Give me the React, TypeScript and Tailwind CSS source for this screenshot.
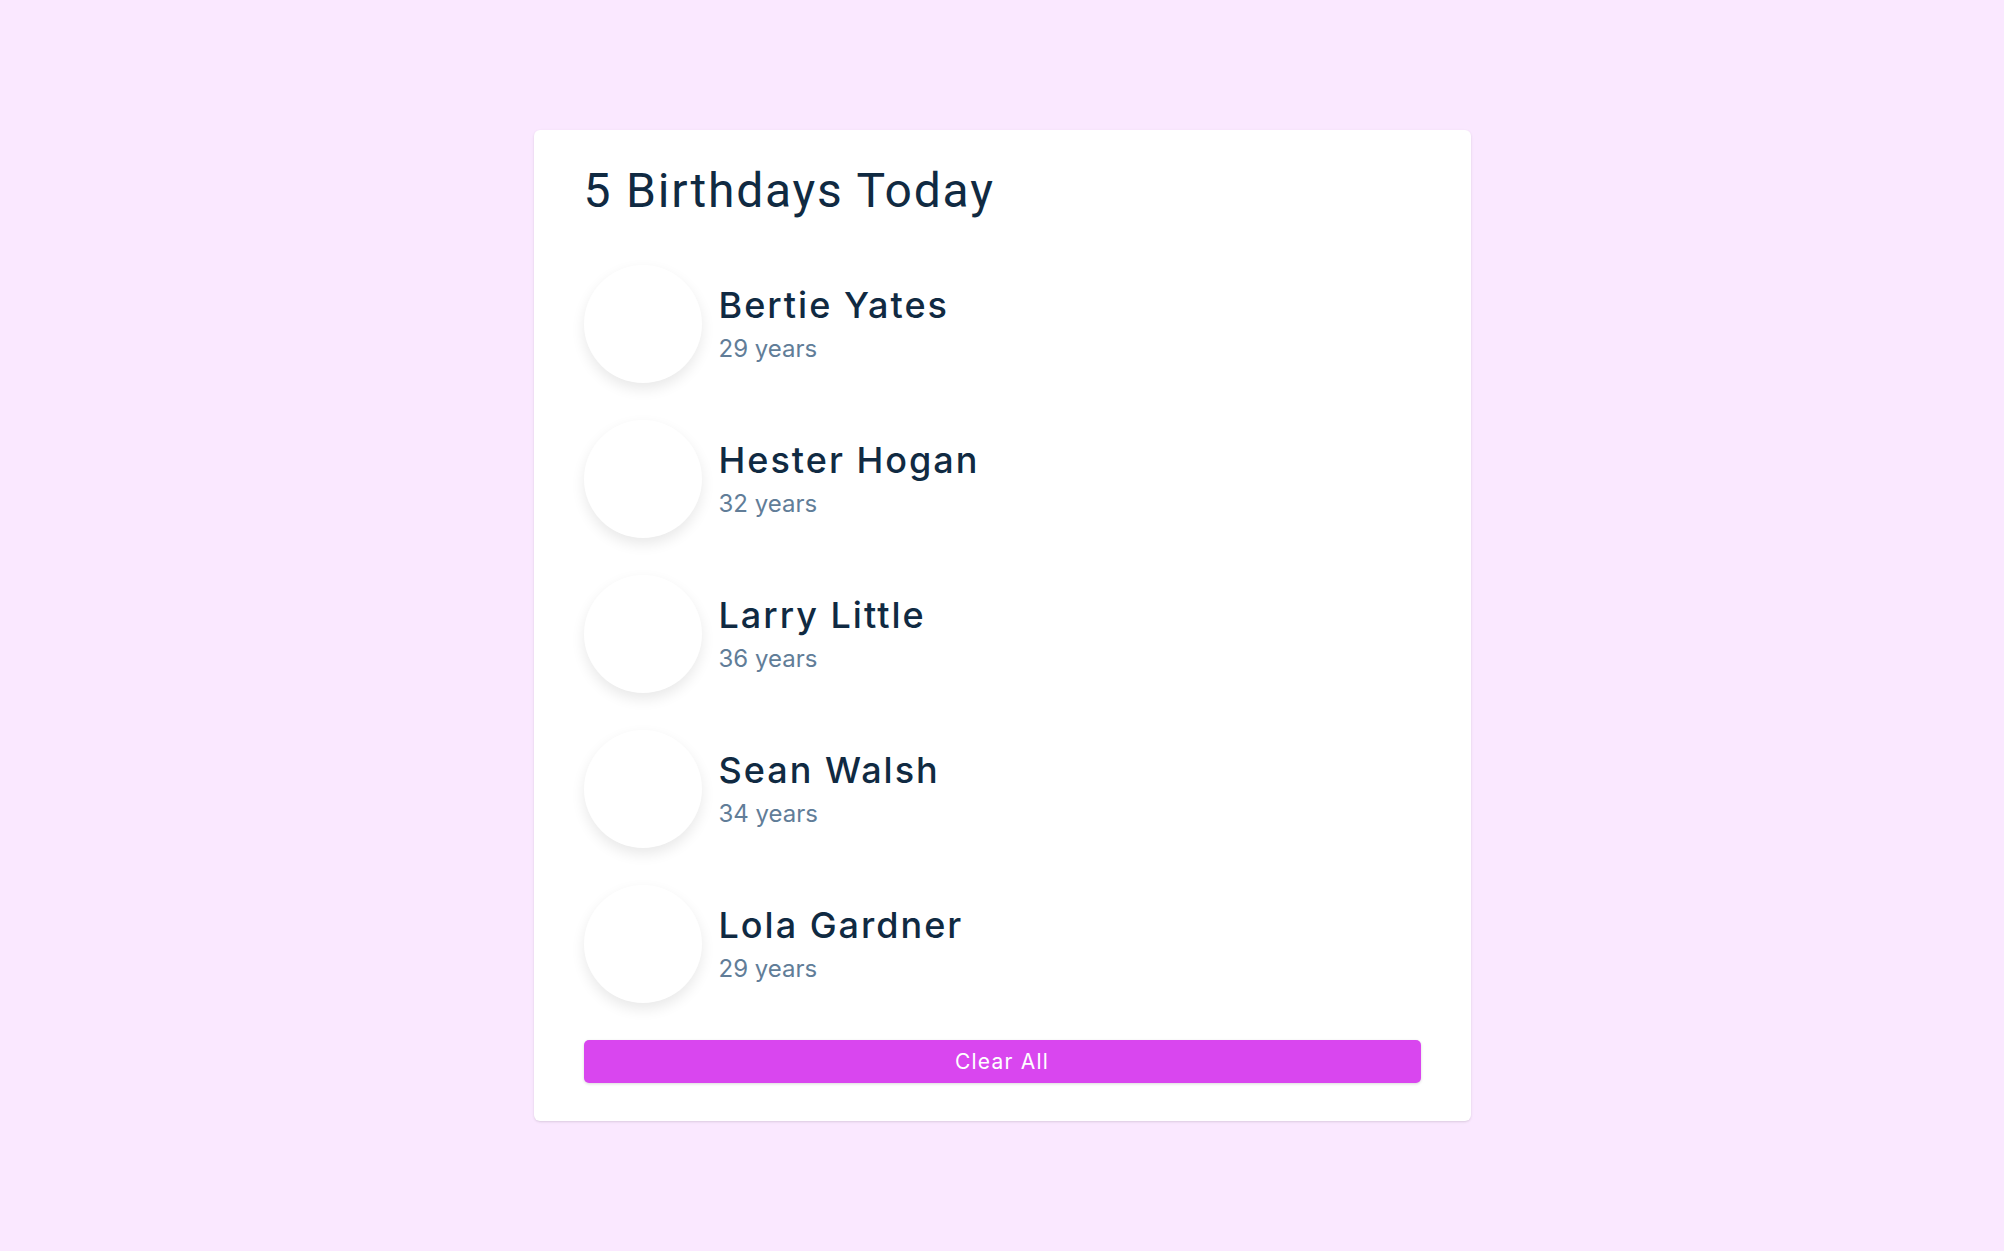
import React from "react";

const people = [
  { name: "Bertie Yates", age: 29 },
  { name: "Hester Hogan", age: 32 },
  { name: "Larry Little", age: 36 },
  { name: "Sean Walsh", age: 34 },
  { name: "Lola Gardner", age: 29 },
];

export default function App() {
  return (
    <main className="min-h-[1251px] w-full bg-[#fae8ff] flex items-center justify-center">
      <section className="w-[937px] bg-white rounded-[6px] shadow-[0_1px_3px_0_rgba(0,0,0,0.1),0_1px_2px_-1px_rgba(0,0,0,0.1)] px-[50px] pt-[31px] pb-[38px] flex flex-col">
        <h3 className="font-['Roboto',sans-serif] text-[48px] leading-[60px] tracking-[1.8px] text-[#102a42] font-normal mb-[44px]">
          5 Birthdays Today
        </h3>
        <div className="flex flex-col">
          {people.map((p) => (
            <article key={p.name} className="flex items-center gap-[17px] mb-[37px]">
              <div className="w-[118px] h-[118px] rounded-full bg-white shadow-[0_6px_14px_rgba(0,0,0,0.09)] shrink-0" />
              <div className="flex flex-col font-['Inter',sans-serif] pt-[2px]">
                <h4 className="text-[36px] leading-[45px] tracking-[2px] font-medium text-[#102a42]">
                  {p.name}
                </h4>
                <p className="text-[24px] leading-[36px] text-[#617d98] mt-[3px]">
                  {p.age} years
                </p>
              </div>
            </article>
          ))}
        </div>
        <button className="w-full h-[43px] rounded-[5px] bg-[#d946ef] text-white font-['Inter',sans-serif] text-[21px] tracking-[1.2px] shadow-[0_1px_3px_rgba(0,0,0,0.15)] flex items-center justify-center">
          Clear All
        </button>
      </section>
    </main>
  );
}
